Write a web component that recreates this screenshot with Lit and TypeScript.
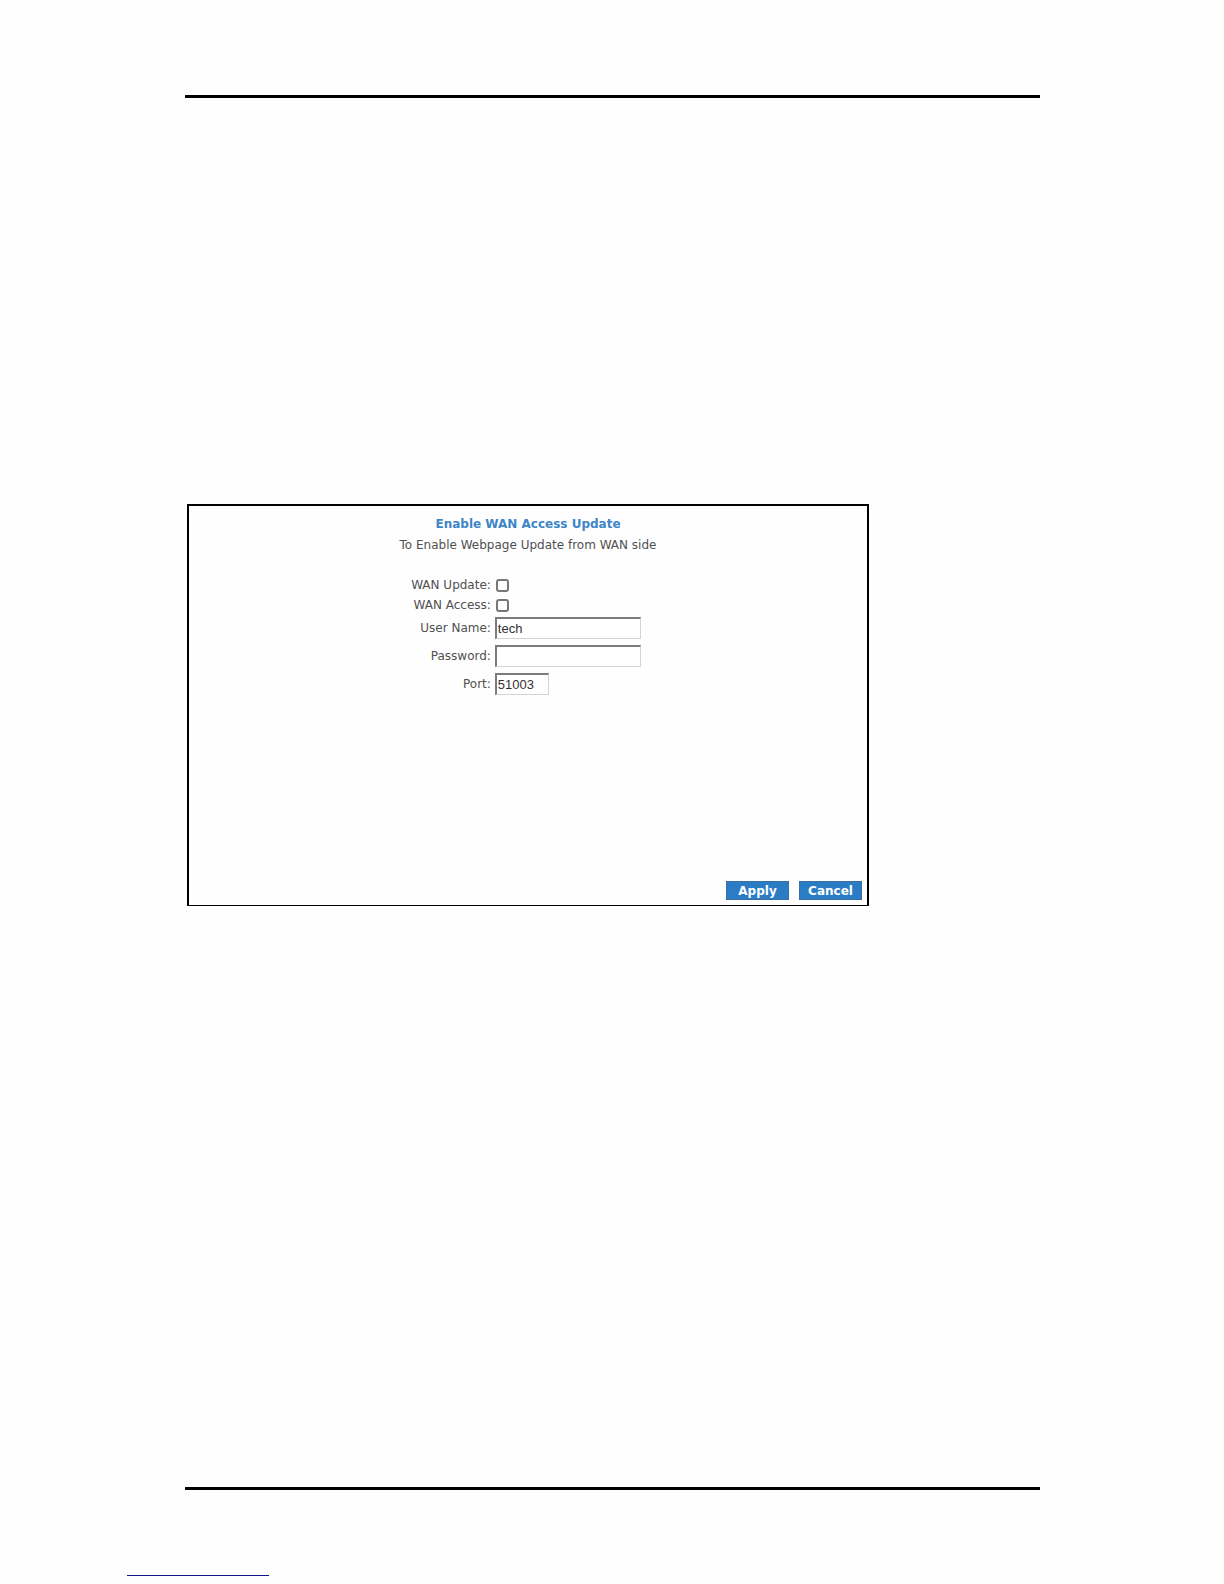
import { LitElement, html, css } from "lit";
import { customElement, state } from "lit/decorators.js";

@customElement("wan-access-form")
export class WanAccessForm extends LitElement {
  static styles = css`
    :host {
      display: block;
      font-family: "DejaVu Sans", Verdana, sans-serif;
      font-size: 12px;
      color: #505050;
    }
    .panel {
      box-sizing: border-box;
      display: flex;
      flex-direction: column;
      align-items: center;
      min-height: 402px;
      padding: 10px 5px 5px;
      border: 2px solid #000;
      border-bottom-width: 1px;
      background: #fefefe;
    }
    .title {
      margin: 0;
      font-size: 12px;
      line-height: 16px;
      font-weight: bold;
      color: #3d85c8;
    }
    .note {
      margin: 5px 0 22px;
      line-height: 16px;
    }
    .fields {
      display: grid;
      grid-template-columns: auto 146px;
      grid-template-rows: 20px 20px 28px 28px 28px;
      column-gap: 4px;
      align-items: start;
      margin-right: 4px;
    }
    .label {
      text-align: right;
      line-height: 20px;
    }
    .label.entry {
      margin-top: 2px;
      line-height: 22px;
    }
    .check {
      appearance: none;
      box-sizing: border-box;
      width: 13px;
      height: 13px;
      margin: 4px 0 0 1px;
      border: 2px solid #777;
      border-radius: 3px;
      background: #fff;
    }
    .check:checked {
      background: #2a7dc5;
    }
    .text {
      box-sizing: border-box;
      width: 100%;
      height: 22px;
      margin: 2px 0 0;
      padding: 0 1px;
      border: 2px solid #7b7b7b;
      border-right: 1px solid #d4d4d4;
      border-bottom: 1px solid #d4d4d4;
      border-radius: 0;
      background: #fff;
      color: #333;
      font-family: "Liberation Sans", Arial, sans-serif;
      font-size: 13px;
    }
    .text.short {
      width: 54px;
    }
    .actions {
      display: flex;
      gap: 10px;
      align-self: flex-end;
      margin-top: auto;
    }
    .button {
      box-sizing: border-box;
      width: 63px;
      height: 19px;
      padding: 0;
      border: 1px solid #3a6f9f;
      background: #2a7dc5;
      color: #fff;
      font-family: inherit;
      font-size: 12px;
      font-weight: bold;
      line-height: 16px;
    }
  `;

  @state() private user = "tech";
  @state() private port = "51003";

  render() {
    return html`
      <form class="panel" @submit=${(e: Event) => e.preventDefault()}>
        <h1 class="title">Enable WAN Access Update</h1>
        <p class="note">To Enable Webpage Update from WAN side</p>
        <div class="fields">
          <label class="label" for="update">WAN Update:</label>
          <input class="check" id="update" type="checkbox" />
          <label class="label" for="access">WAN Access:</label>
          <input class="check" id="access" type="checkbox" />
          <label class="label entry" for="user">User Name:</label>
          <input class="text" id="user" type="text" .value=${this.user} />
          <label class="label entry" for="password">Password:</label>
          <input class="text" id="password" type="password" />
          <label class="label entry" for="port">Port:</label>
          <input class="text short" id="port" type="text" .value=${this.port} />
        </div>
        <div class="actions">
          <button class="button" type="submit">Apply</button>
          <button class="button" type="reset">Cancel</button>
        </div>
      </form>
    `;
  }
}

@customElement("app-root")
export class AppRoot extends LitElement {
  static styles = css`
    :host {
      display: flex;
      flex-direction: column;
      box-sizing: border-box;
      min-height: 100vh;
      padding-top: 95px;
      background: #fefefe;
    }
    .rule {
      height: 3px;
      margin: 0 184px 0 185px;
      border: 0;
      background: #000;
    }
    .content {
      flex: 1;
      padding: 406px 184px 40px 187px;
    }
    .figure {
      max-width: 682px;
    }
    .footer {
      padding: 85px 127px 8px;
    }
    .footline {
      width: 142px;
      height: 1px;
      margin: 0;
      border: 0;
      background: #14148c;
    }
  `;

  render() {
    return html`
      <hr class="rule" />
      <main class="content">
        <wan-access-form class="figure"></wan-access-form>
      </main>
      <hr class="rule" />
      <footer class="footer"><hr class="footline" /></footer>
    `;
  }
}
